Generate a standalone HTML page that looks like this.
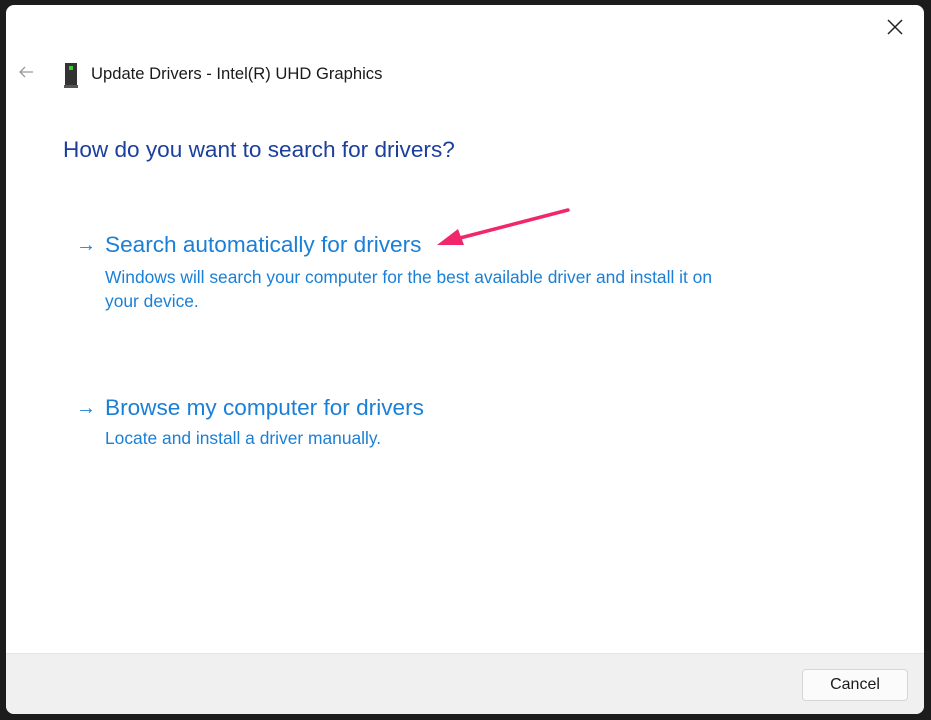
<!DOCTYPE html>
<html><head><meta charset="utf-8"><style>
html,body{margin:0;padding:0;width:931px;height:720px;background:#1c1c1c;overflow:hidden;font-family:"Liberation Sans",sans-serif}
.win{position:absolute;left:6px;top:5px;width:918px;height:709px;background:#fff;border-radius:8px;overflow:hidden}
.footer{position:absolute;left:0;top:648px;width:918px;height:61px;background:#f0f0f0;border-top:1px solid #e6e6e6}
.btn{position:absolute;left:796px;top:15px;width:104px;height:30px;background:#fbfbfb;border:1px solid #d6d6d6;border-radius:4px;font-size:16px;color:#1a1a1a;text-align:center;line-height:30px}
.t{position:absolute;white-space:nowrap}
.blue{color:#1a7fd6}
</style></head><body>
<div class="win">
  <svg class="t" style="left:880px;top:13px" width="18" height="18"><path d="M2 2L16 16M16 2L2 16" stroke="#222" stroke-width="1.5"/></svg>
  <svg class="t" style="left:12px;top:61px" width="16" height="12"><path d="M15 6H2M7 1L2 6L7 11" stroke="#999" stroke-width="1.3" fill="none"/></svg>
  <svg class="t" style="left:58px;top:58px" width="14" height="26"><rect x="1" y="0" width="12" height="22" fill="#333"/><rect x="5" y="3" width="4" height="4" fill="#3c3"/><rect x="0" y="22" width="14" height="3" fill="#555"/></svg>
  <div class="t" style="left:85px;top:59px;font-size:16.6px;color:#1a1a1a">Update Drivers - Intel(R) UHD Graphics</div>
  <div class="t" style="left:57px;top:132px;font-size:22.6px;color:#1b3f9c">How do you want to search for drivers?</div>
  <div class="t blue" style="left:70px;top:229px;font-size:20px">→</div>
  <div class="t blue" style="left:99px;top:227px;font-size:22.6px">Search automatically for drivers</div>
  <div class="t blue" style="left:99px;top:260px;font-size:17.4px;line-height:24px">Windows will search your computer for the best available driver and install it on<br>your device.</div>
  <div class="t blue" style="left:70px;top:392px;font-size:20px">→</div>
  <div class="t blue" style="left:99px;top:390px;font-size:22.6px">Browse my computer for drivers</div>
  <div class="t blue" style="left:99px;top:423px;font-size:17.4px">Locate and install a driver manually.</div>
  <svg class="t" style="left:420px;top:200px" width="150" height="50"><path d="M142 5L34 33" stroke="#f0286a" stroke-width="3.5" stroke-linecap="round"/><path d="M11 40L32 24L38 40Z" fill="#f0286a"/></svg>
  <div class="footer"><div class="btn">Cancel</div></div>
</div>
</body></html>
